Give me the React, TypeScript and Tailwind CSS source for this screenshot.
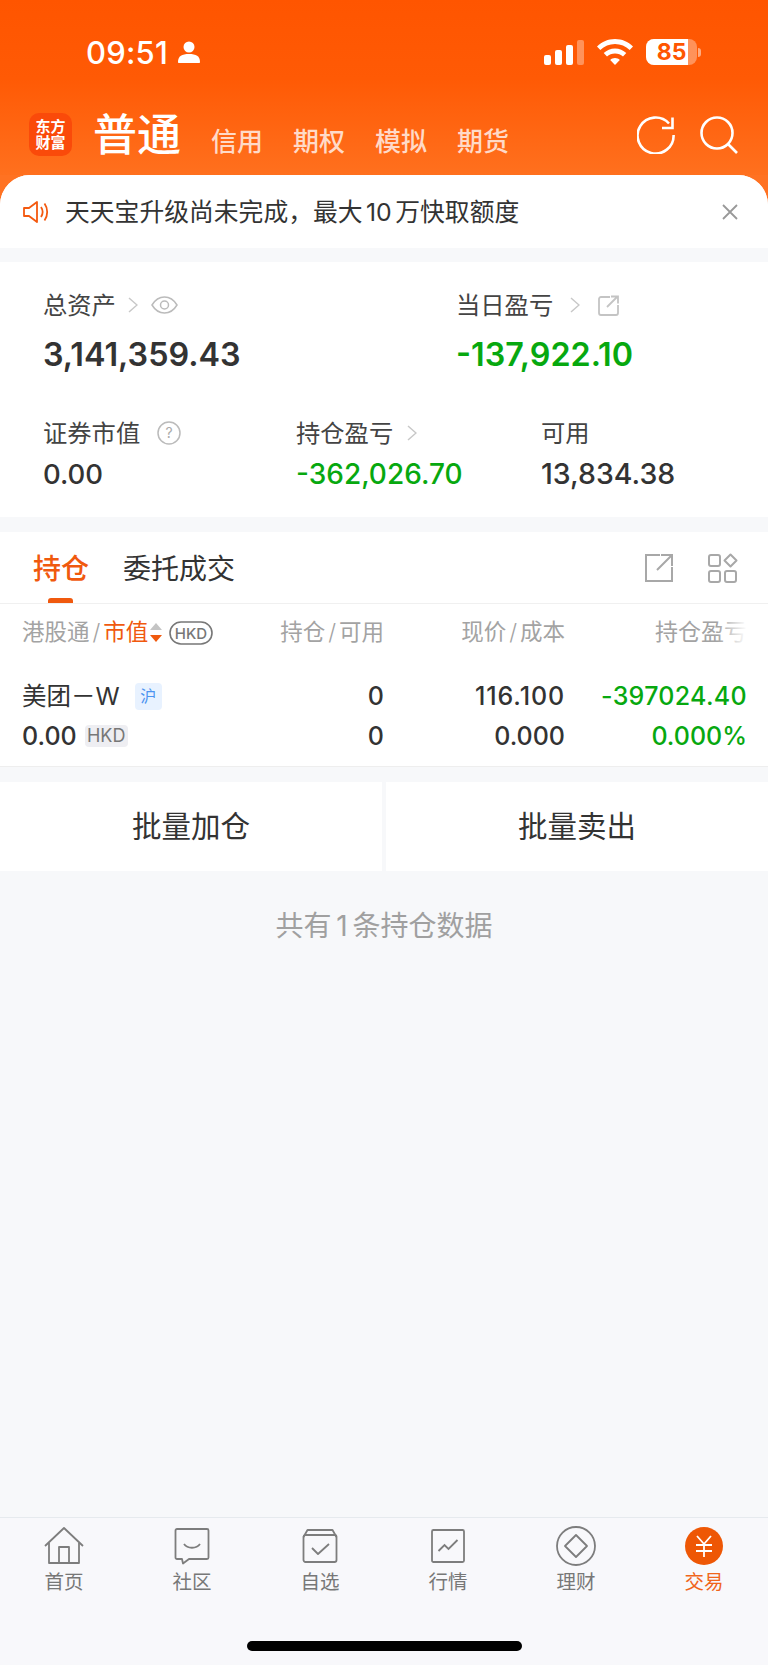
import React from 'react';

const sans = "font-['Inter','Noto_Sans_CJK_SC',sans-serif]";

function Chevron({ className = '' }: { className?: string }) {
  return (
    <svg viewBox="0 0 10 16" className={`w-[10px] h-[16px] ${className}`} fill="none" stroke="#c8c8c8" strokeWidth="1.5">
      <path d="M1 1l8 7-8 7" />
    </svg>
  );
}

function StatusBar() {
  return (
    <div className="flex items-center h-[104px] pl-[86px] pr-[67px] text-white">
      <span className="text-[31px] leading-none font-medium tracking-[0.2px]">09:51</span>
      <svg viewBox="0 0 22 22" className="w-[22px] h-[22px] ml-[10px]" fill="#fff">
        <circle cx="11" cy="6" r="5.5" />
        <path d="M0 21c0-6 4-8 11-8s11 2 11 8c0 .6-.4 1-1 1H1c-.6 0-1-.4-1-1z" />
      </svg>
      <div className="ml-auto flex items-center">
        <svg viewBox="0 0 40 25" className="w-[40px] h-[25px]">
          <rect x="0" y="15" width="7" height="10" rx="2" fill="#fff" />
          <rect x="11" y="10" width="7" height="15" rx="2" fill="#fff" />
          <rect x="22" y="5" width="7" height="20" rx="2" fill="#fff" />
          <rect x="33" y="0" width="7" height="25" rx="2" fill="#fff" fillOpacity="0.35" />
        </svg>
        <svg viewBox="0 0 36 26" className="w-[36px] h-[26px] ml-[13px]" fill="#fff">
          <path d="M18 0c7 0 13 2.700 18 7.500l-3.300 3.500C28.700 7.200 23.600 5 18 5S7.300 7.200 3.300 11L0 7.500C5 2.700 11 0 18 0z" />
          <path d="M18 9.500c4.400 0 8.300 1.700 11.300 4.600L26 17.600c-2.100-2-4.900-3.200-8-3.200s-5.900 1.200-8 3.200l-3.300-3.500c3-2.900 6.900-4.600 11.300-4.600z" />
          <path d="M18 19c1.900 0 3.500.7 4.800 1.900L18 26l-4.800-5.100C14.500 19.700 16.100 19 18 19z" />
        </svg>
        <div className="ml-[13px] relative w-[51px] h-[26px] rounded-[8px] overflow-hidden bg-white/35">
          <div className="w-[42px] h-full bg-white" />
          <span className="absolute inset-0 flex items-center justify-center text-[#ff5500] text-[23px] font-bold leading-none">85</span>
        </div>
        <div className="w-[3px] h-[9px] ml-[1px] rounded-r-[3px] bg-white/50" />
      </div>
    </div>
  );
}

function NavBar() {
  return (
    <div className="flex items-center h-[71px] pb-[10px] pl-[29px] pr-[30px] text-white">
      <div className="w-[43px] h-[43px] rounded-[10px] bg-[#fa4a0a] flex flex-col items-center justify-center text-[15px] leading-[16px] font-bold font-['Liberation_Serif','Noto_Sans_CJK_SC',serif]">
        <span>东方</span>
        <span>财富</span>
      </div>
      <span className="ml-[21px] text-[44px] leading-none font-medium">普通</span>
      <div className="ml-[30px] mt-[14px] flex gap-[30px] text-[26px] leading-none text-[#ffdac8] font-medium">
        <span>信用</span>
        <span>期权</span>
        <span>模拟</span>
        <span>期货</span>
      </div>
      <svg viewBox="0 0 38 38" className="w-[38px] h-[38px] ml-auto" fill="none" stroke="#fff" strokeWidth="2.600">
        <path d="M32 7.500A18 18 0 1 0 36.600 19" />
        <path d="M35.500 1.500v10.500H25" />
      </svg>
      <svg viewBox="0 0 38 38" className="w-[38px] h-[38px] ml-[25px]" fill="none" stroke="#fff" strokeWidth="2.600">
        <circle cx="17" cy="17" r="15.500" />
        <path d="M28 28l9 9" />
      </svg>
    </div>
  );
}

function Notice() {
  return (
    <div className="flex items-center h-[73px] pl-[23px] pr-[30px] bg-white rounded-t-[30px] text-[#333]">
      <svg viewBox="0 0 26 24" className="w-[26px] h-[24px]" fill="none" stroke="#f4590f" strokeWidth="1.800">
        <path d="M1 8h5l8-6v20l-8-6H1z" strokeLinejoin="round" />
        <path d="M18 7c2 3 2 7 0 10" />
        <path d="M21.500 3.500c3.600 5 3.600 12 0 17" />
      </svg>
      <span className="ml-[16px] mt-[2px] text-[24.800px] leading-none [word-spacing:-3.500px]">天天宝升级尚未完成，最大 10 万快取额度</span>
      <svg viewBox="0 0 16 16" className="w-[16px] h-[16px] ml-auto" fill="none" stroke="#999" strokeWidth="1.800">
        <path d="M1 1l14 14M15 1L1 15" />
      </svg>
    </div>
  );
}

function Summary() {
  return (
    <div className="mt-[14px] h-[255px] bg-white pl-[43px] pt-[26px] text-[#333]">
      <div className="flex">
        <div className="w-[413px]">
          <div className="flex items-center h-[30px] pt-[4px] text-[24.300px] leading-none text-[#444]">
            <span>总资产</span>
            <Chevron className="ml-[12px]" />
            <svg viewBox="0 0 27 18" className="w-[27px] h-[18px] ml-[13px]" fill="none" stroke="#bbb" strokeWidth="1.500">
              <path d="M1 9c3-5 7.500-8 12.500-8S23 4 26 9c-3 5-7.500 8-12.500 8S4 14 1 9z" />
              <circle cx="13.500" cy="9" r="4" />
            </svg>
          </div>
          <div className="mt-[18px] text-[32.300px] leading-[38px] font-semibold">3,141,359.43</div>
        </div>
        <div>
          <div className="flex items-center h-[30px] pt-[4px] text-[24.300px] leading-none text-[#444]">
            <span>当日盈亏</span>
            <Chevron className="ml-[17px]" />
            <svg viewBox="0 0 21 21" className="w-[21px] h-[21px] ml-[18px]" fill="none" stroke="#c4c4c4" strokeWidth="1.800">
              <path d="M12 2H3a2 2 0 0 0-2 2v14a2 2 0 0 0 2 2h15a2 2 0 0 0 2-2V10" />
              <path d="M9 12l10-10M13 1.500h7v7" />
            </svg>
          </div>
          <div className="mt-[18px] text-[32.300px] leading-[38px] font-semibold text-[#07a80f]">-137,922.10</div>
        </div>
      </div>
      <div className="flex mt-[44px]">
        <div className="w-[253px]">
          <div className="flex items-center h-[30px] text-[24.300px] leading-none text-[#444]">
            <span>证券市值</span>
            <svg viewBox="0 0 24 24" className="w-[24px] h-[24px] ml-[17px]" fill="none" stroke="#bbb" strokeWidth="1.500">
              <circle cx="12" cy="12" r="11" />
              <text x="12" y="17" textAnchor="middle" fontSize="14" fill="#aaa" stroke="none">?</text>
            </svg>
          </div>
          <div className="mt-[9px] text-[27.500px] leading-[34px] font-medium">0.00</div>
        </div>
        <div className="w-[245px]">
          <div className="flex items-center h-[30px] text-[24.300px] leading-none text-[#444]">
            <span>持仓盈亏</span>
            <Chevron className="ml-[14px]" />
          </div>
          <div className="mt-[9px] text-[28px] leading-[34px] font-medium text-[#07a80f]">-362,026.70</div>
        </div>
        <div>
          <div className="flex items-center h-[30px] text-[24.300px] leading-none text-[#444]">可用</div>
          <div className="mt-[9px] text-[28.500px] leading-[34px] font-medium">13,834.38</div>
        </div>
      </div>
    </div>
  );
}

function Tabs() {
  return (
    <div className="mt-[15px] h-[72px] bg-white flex items-center pt-[2px] pl-[33px] pr-[30px] border-b border-[#f0f0f0]">
      <div className="relative text-[28px] leading-none text-[#f0590e] font-medium">
        持仓
        <div className="absolute left-[15px] top-[43px] w-[25px] h-[5px] rounded-t-[3px] bg-[#f0590e]" />
      </div>
      <span className="ml-[34px] text-[28px] leading-none text-[#333]">委托成交</span>
      <svg viewBox="0 0 28 28" className="w-[28px] h-[28px] ml-auto mb-[2px]" fill="none" stroke="#a8a8a8" strokeWidth="2">
        <path d="M15 1H1v26h26V13" />
        <path d="M12 16L26 2M16 1h11v11" />
      </svg>
      <svg viewBox="0 0 30 30" className="w-[30px] h-[30px] ml-[35px] mb-[2px]" fill="none" stroke="#a8a8a8" strokeWidth="2">
        <rect x="1" y="2" width="11" height="11" rx="2" />
        <rect x="1" y="18" width="11" height="11" rx="2" />
        <rect x="17" y="18" width="11" height="11" rx="2" />
        <path d="M22.500 1.500l6 6-6 6-6-6z" strokeLinejoin="round" />
      </svg>
    </div>
  );
}

function Holdings() {
  return (
    <div className="bg-white h-[163px] border-b border-[#eeeeee] pl-[22px] pr-[21px]">
      <div className="flex items-center h-[57px] text-[22.500px] leading-none text-[#a3a3a3]">
        <div className="w-[221px] flex items-center">
          <span>港股通</span>
          <span className="mx-[3px] font-light">/</span>
          <span className="text-[#f0590e]">市值</span>
          <svg viewBox="0 0 14 22" className="w-[14px] h-[22px] ml-[1px]">
            <path d="M7 1l6 7H1z" fill="#c4c4c4" />
            <path d="M7 20l6-7H1z" fill="#f0590e" />
          </svg>
          <svg viewBox="0 0 44 24" className="w-[44px] h-[24px] ml-[6px]" fill="none" stroke="#777" strokeWidth="1.600">
            <path d="M12 23A11 11 0 0 1 12 1h20" />
            <path d="M32 1a11 11 0 0 1 0 22H12" />
            <text x="22" y="17.500" textAnchor="middle" fontSize="15" fill="#777" stroke="none" fontWeight="500">HKD</text>
          </svg>
        </div>
        <div className="w-[141px] text-right">持仓<span className="mx-[3px] font-light">/</span>可用</div>
        <div className="w-[181px] text-right">现价<span className="mx-[3px] font-light">/</span>成本</div>
        <div className="w-[182px] text-right relative text-[23px]">
          持仓盈亏
          <div className="absolute right-0 top-0 w-[30px] h-full bg-gradient-to-r from-transparent to-white" />
        </div>
      </div>
      <div className="flex items-center h-[40px] mt-[15px] text-[25px] leading-none font-medium text-[#333]">
        <div className="w-[221px] flex items-center">
          <span className="text-[24.500px] font-normal">美团－W</span>
          <span className="ml-[15px] w-[27px] h-[27px] rounded-[4px] bg-[#e8f2ff] text-[#4d94f0] text-[16px] font-normal flex items-center justify-center">沪</span>
        </div>
        <div className="w-[141px] text-right">0</div>
        <div className="w-[181px] text-right tracking-[0.9px]">116.100</div>
        <div className="w-[182px] text-right text-[#07a80f] tracking-[0.3px]">-397024.40</div>
      </div>
      <div className="flex items-center h-[40px] text-[25px] leading-none font-medium text-[#333]">
        <div className="w-[221px] flex items-center">
          <span>0.00</span>
          <span className="ml-[8px] w-[43px] h-[22px] rounded-[4px] bg-[#eeeef2] text-[#777] text-[18px] font-normal flex items-center justify-center">HKD</span>
        </div>
        <div className="w-[141px] text-right">0</div>
        <div className="w-[181px] text-right">0.000</div>
        <div className="w-[182px] text-right text-[#07a80f]">0.000%</div>
      </div>
    </div>
  );
}

const tabItems = [
  {
    label: '首页',
    icon: (
      <svg viewBox="0 0 40 38" className="w-[40px] h-[38px]" fill="none" stroke="#7d7d7d" strokeWidth="1.800" strokeLinejoin="round">
        <path d="M1 19L20 1l19 18" />
        <path d="M5 16v20h30V16" />
        <path d="M15 36V20h10v16" />
      </svg>
    ),
  },
  {
    label: '社区',
    icon: (
      <svg viewBox="0 0 36 38" className="w-[36px] h-[38px]" fill="none" stroke="#7d7d7d" strokeWidth="1.800" strokeLinejoin="round">
        <path d="M3 2h30a1.500 1.500 0 0 1 1.500 1.500v27a1.500 1.500 0 0 1-1.500 1.500H15l-6 4.500-1-4.500H3a1.500 1.500 0 0 1-1.500-1.500v-27A1.500 1.500 0 0 1 3 2z" />
        <path d="M10 17c3.500 5 12.500 5 16 0" />
      </svg>
    ),
  },
  {
    label: '自选',
    icon: (
      <svg viewBox="0 0 36 36" className="w-[36px] h-[36px]" fill="none" stroke="#7d7d7d" strokeWidth="1.800" strokeLinejoin="round">
        <rect x="1.500" y="7" width="33" height="27" rx="2" />
        <path d="M1.500 9l4-7h25l4 7" />
        <path d="M10 20l6 6 11-10" />
      </svg>
    ),
  },
  {
    label: '行情',
    icon: (
      <svg viewBox="0 0 34 36" className="w-[34px] h-[36px]" fill="none" stroke="#7d7d7d" strokeWidth="1.800">
        <rect x="1" y="2" width="32" height="32" rx="1.500" />
        <path d="M7.500 23l6-6 4 4 9-9" />
      </svg>
    ),
  },
  {
    label: '理财',
    icon: (
      <svg viewBox="0 0 40 40" className="w-[40px] h-[40px]" fill="none" stroke="#7d7d7d" strokeWidth="1.800" strokeLinejoin="round">
        <circle cx="20" cy="20" r="19" />
        <path d="M20 9l11 11-11 11L9 20z" />
      </svg>
    ),
  },
  {
    label: '交易',
    active: true,
    icon: (
      <svg viewBox="0 0 38 38" className="w-[38px] h-[38px]">
        <circle cx="19" cy="19" r="19" fill="#ee5705" />
        <path d="M12 9l7 8 7-8M11 18h16M11 24h16M19 17v13" fill="none" stroke="#fff" strokeWidth="1.800" />
      </svg>
    ),
  },
];

function TabBar() {
  return (
    <div className="h-[148px] bg-[#f8f8fb] border-t border-[#e6eaee]">
      <div className="grid grid-cols-6 h-[97px]">
        {tabItems.map((item) => (
          <div key={item.label} className="flex flex-col items-center pt-[8px]">
            <div className="h-[40px] flex items-center justify-center">{item.icon}</div>
            <span className={`mt-[4px] text-[19.500px] leading-[24px] ${item.active ? 'text-[#f0651b]' : 'text-[#777]'}`}>{item.label}</span>
          </div>
        ))}
      </div>
      <div className="flex justify-center mt-[26px]">
        <div className="w-[275px] h-[10px] rounded-full bg-black" />
      </div>
    </div>
  );
}

export default function App() {
  return (
    <div className={`${sans} w-[768px] h-[1665px] flex flex-col bg-[#f7f8fa] overflow-hidden`}>
      <div className="bg-[linear-gradient(180deg,#ff5500_0%,#ff5a05_45%,#ff701e_100%)] h-[175px] shrink-0">
        <StatusBar />
        <NavBar />
      </div>
      <div className="bg-[#ff7222] shrink-0">
        <div className="bg-[#f7f8fa] rounded-t-[30px]">
          <Notice />
        </div>
      </div>
      <Summary />
      <Tabs />
      <Holdings />
      <div className="mt-[15px] h-[89px] flex gap-[4px]">
        <div className="flex-1 bg-white flex items-center justify-center text-[29.500px] leading-none text-[#333]">批量加仓</div>
        <div className="flex-1 bg-white flex items-center justify-center text-[29.500px] leading-none text-[#333]">批量卖出</div>
      </div>
      <div className="flex-1 pt-[41px] text-center text-[28px] leading-none text-[#a0a0a0] [word-spacing:-3px]">共有 1 条持仓数据</div>
      <TabBar />
    </div>
  );
}
